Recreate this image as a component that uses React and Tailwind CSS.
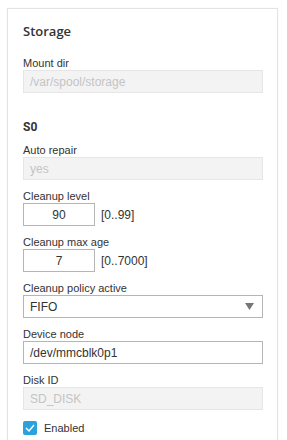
import React from 'react';

const Label = ({ children }) => (
    <div className="text-[11px] leading-[13px] text-[#333]">{children}</div>
);

const Field = ({ label, children }) => (
    <div className="mb-[10px]">
        <Label>{label}</Label>
        {children}
    </div>
);

const DisabledInput = ({ value }) => (
    <div className="h-[23px] w-[240px] bg-[#f3f3f3] border border-[#e6e6e6] px-[6px] flex items-center text-[12px] text-[#c4c4c4]">
        {value}
    </div>
);

const TextInput = ({ value }) => (
    <div className="h-[23px] w-[240px] bg-white border border-[#b5b5b5] px-[6px] flex items-center text-[12px] text-[#333]">
        {value}
    </div>
);

const NumberInput = ({ value, range }) => (
    <div className="flex items-center gap-[6px]">
        <div className="h-[23px] w-[72px] bg-white border border-[#b5b5b5] flex items-center justify-center text-[12px] text-[#333]">
            {value}
        </div>
        <span className="text-[12px] text-[#333]">{range}</span>
    </div>
);

const App = () => {
    return (
        <div className="w-[287px] h-[440px] bg-white overflow-hidden font-['Liberation_Sans',Arial,sans-serif]">
            <div className="ml-[7px] mt-2 w-[271px] h-[460px] border border-[#e3e3e3] shadow-[0_0_2px_rgba(0,0,0,0.04)] pl-[15px] pt-[14px]">
                {/* Storage */}
                <div className="text-[13px] leading-4 font-semibold text-[#333] font-['Open_Sans',sans-serif]">Storage</div>
                <div className="mt-[18px]">
                    <Label>Mount dir</Label>
                    <DisabledInput value="/var/spool/storage" />
                </div>

                {/* S0 */}
                <div className="mt-[27px] mb-[10px] text-[12px] leading-[14px] font-bold text-[#333] font-['Roboto',sans-serif]">S0</div>
                <Field label="Auto repair">
                    <DisabledInput value="yes" />
                </Field>
                <Field label="Cleanup level">
                    <NumberInput value="90" range="[0..99]" />
                </Field>
                <Field label="Cleanup max age">
                    <NumberInput value="7" range="[0..7000]" />
                </Field>
                <Field label="Cleanup policy active">
                    <div className="h-[23px] w-[240px] bg-white border border-[#b5b5b5] pl-[6px] pr-[8px] flex items-center justify-between text-[12px] text-[#333]">
                        <span>FIFO</span>
                        <svg width="9" height="7" viewBox="0 0 9 7">
                            <path d="M0 0 L9 0 L4.5 7 Z" fill="#777" />
                        </svg>
                    </div>
                </Field>
                <Field label="Device node">
                    <TextInput value="/dev/mmcblk0p1" />
                </Field>
                <Field label="Disk ID">
                    <DisabledInput value="SD_DISK" />
                </Field>

                <div className="mt-[2px] flex items-center gap-[7px]">
                    <div className="w-[14px] h-[14px] rounded-[2px] bg-[#2ba2dc] flex items-center justify-center">
                        <svg width="10" height="8" viewBox="0 0 10 8">
                            <path d="M1 4 L4 7 L9 1" stroke="white" strokeWidth="1.4" fill="none" />
                        </svg>
                    </div>
                    <span className="text-[11px] text-[#333]">Enabled</span>
                </div>
            </div>
        </div>
    );
};

export default App;
